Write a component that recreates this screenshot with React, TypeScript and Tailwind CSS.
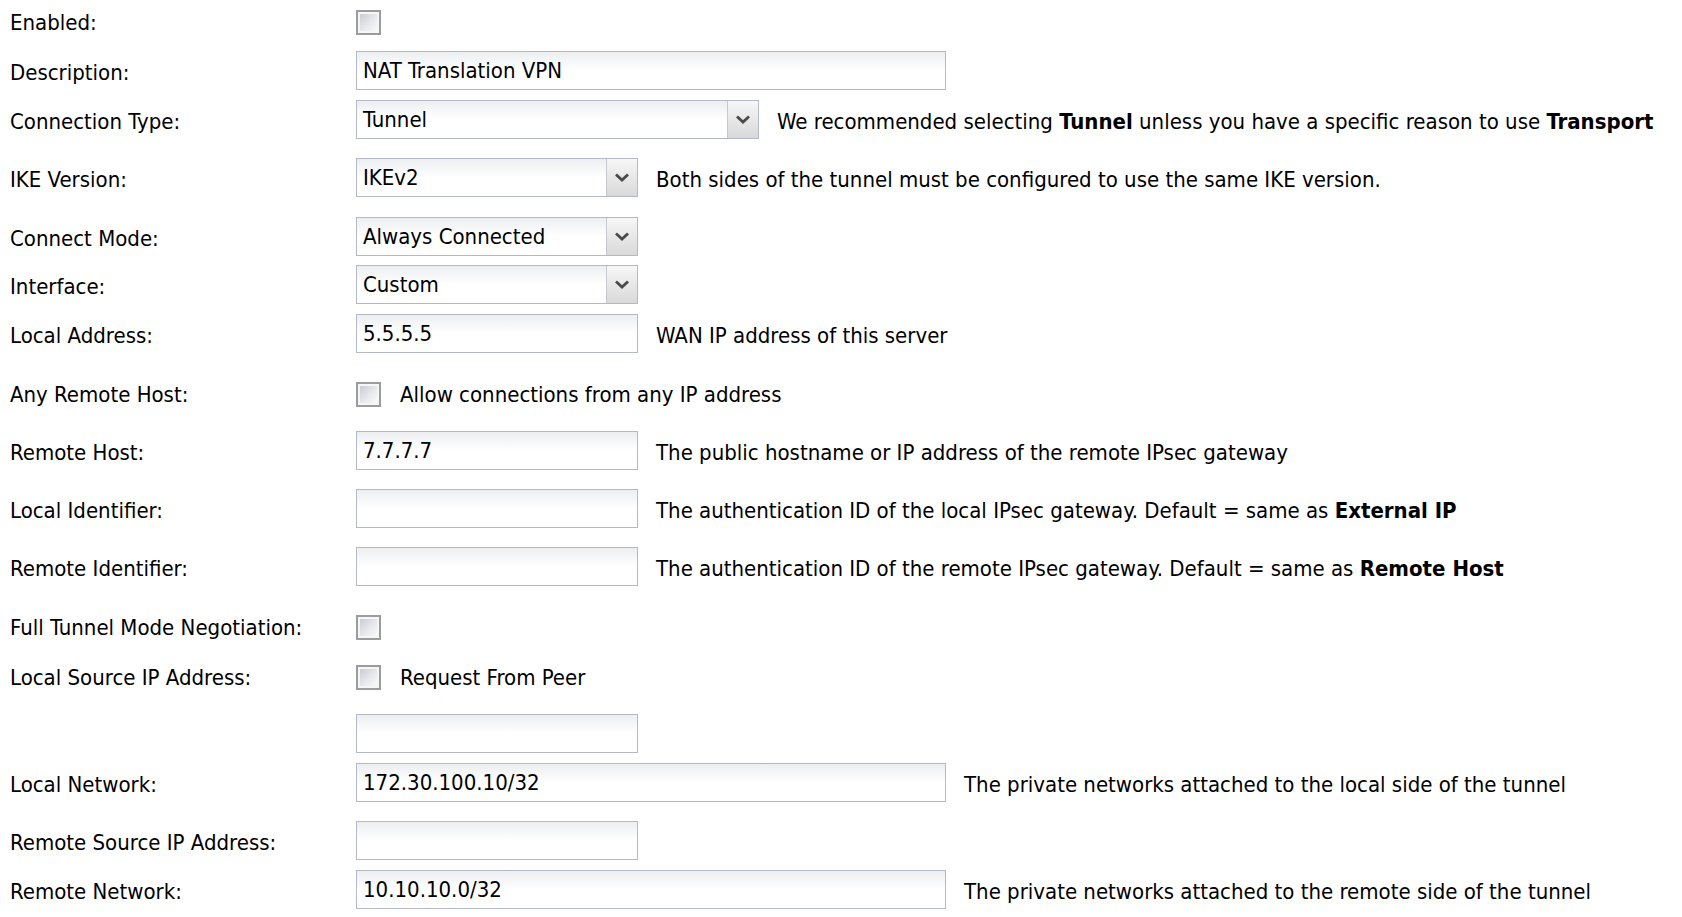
import React from 'react';

const font = { fontFamily: '"DejaVu Sans Condensed", "DejaVu Sans", sans-serif' };

function Checkbox() {
  return (
    <div className="w-[25px] h-[25px] shrink-0 border-2 border-[#9c9c9c] bg-[#f6f6f6] p-[2px]">
      <div className="w-full h-full bg-gradient-to-br from-[#c9ccd4] via-[#e4e6ea] to-[#fafafa]" />
    </div>
  );
}

function TextBox({ value = '', wide = false }: { value?: string; wide?: boolean }) {
  return (
    <div
      className={`${wide ? 'w-[590px]' : 'w-[282px]'} h-[39px] shrink-0 border border-[#b5b8c8] bg-gradient-to-b from-[#eceef0] via-white to-white flex items-center px-[6px] text-[22px] leading-[26px] text-black`}
    >
      {value}
    </div>
  );
}

function Select({ value, wide = false }: { value: string; wide?: boolean }) {
  return (
    <div
      className={`${wide ? 'w-[403px]' : 'w-[282px]'} h-[39px] shrink-0 border border-[#b5b8c8] flex`}
    >
      <div className="flex-1 flex items-center px-[6px] text-[22px] leading-[26px] text-black bg-gradient-to-b from-[#eceef0] via-white to-white">
        {value}
      </div>
      <div className="w-[31px] border-l border-[#c6c8cf] bg-gradient-to-b from-[#f7f7f7] to-[#d9d9d9] flex items-center justify-center">
        <svg width="14" height="9" viewBox="0 0 14 9">
          <path d="M1 1.5 L7 7 L13 1.5" fill="none" stroke="#4a4a4a" strokeWidth="2.8" />
        </svg>
      </div>
    </div>
  );
}

function Row({
  label,
  mt,
  box = false,
  children,
}: {
  label: string;
  mt: string;
  box?: boolean;
  children: React.ReactNode;
}) {
  return (
    <div className={`flex items-center ${box ? 'h-[25px]' : 'h-[39px]'} ${mt}`}>
      <div
        className={`w-[356px] shrink-0 pl-[10px] text-[22px] leading-[26px] text-black whitespace-nowrap ${box ? '' : 'pt-[5px]'}`}
      >
        {label}
      </div>
      <div className="flex items-center">{children}</div>
    </div>
  );
}

function Help({ children }: { children: React.ReactNode }) {
  return (
    <span className="ml-[18px] pt-[5px] text-[22px] leading-[26px] text-black whitespace-nowrap">{children}</span>
  );
}

export default function App() {
  return (
    <div className="min-h-screen bg-white w-[1682px] overflow-hidden" style={font}>
      <div className="flex flex-col pt-[10px]">
        <Row label="Enabled:" mt="mt-0" box>
          <Checkbox />
        </Row>
        <Row label="Description:" mt="mt-[16px]">
          <TextBox value="NAT Translation VPN" wide />
        </Row>
        <Row label="Connection Type:" mt="mt-[10px]">
          <Select value="Tunnel" wide />
          <Help>
            We recommended selecting <b>Tunnel</b> unless you have a specific reason to use <b>Transport</b>
          </Help>
        </Row>
        <Row label="IKE Version:" mt="mt-[19px]">
          <Select value="IKEv2" />
          <Help>Both sides of the tunnel must be configured to use the same IKE version.</Help>
        </Row>
        <Row label="Connect Mode:" mt="mt-[20px]">
          <Select value="Always Connected" />
        </Row>
        <Row label="Interface:" mt="mt-[9px]">
          <Select value="Custom" />
        </Row>
        <Row label="Local Address:" mt="mt-[10px]">
          <TextBox value="5.5.5.5" />
          <Help>WAN IP address of this server</Help>
        </Row>
        <Row label="Any Remote Host:" mt="mt-[29px]" box>
          <Checkbox />
          <span className="ml-[19px] text-[22px] leading-[26px] text-black">Allow connections from any IP address</span>
        </Row>
        <Row label="Remote Host:" mt="mt-[24px]">
          <TextBox value="7.7.7.7" />
          <Help>The public hostname or IP address of the remote IPsec gateway</Help>
        </Row>
        <Row label="Local Identifier:" mt="mt-[19px]">
          <TextBox />
          <Help>
            The authentication ID of the local IPsec gateway. Default = same as <b>External IP</b>
          </Help>
        </Row>
        <Row label="Remote Identifier:" mt="mt-[19px]">
          <TextBox />
          <Help>
            The authentication ID of the remote IPsec gateway. Default = same as <b>Remote Host</b>
          </Help>
        </Row>
        <Row label="Full Tunnel Mode Negotiation:" mt="mt-[29px]" box>
          <Checkbox />
        </Row>
        <Row label="Local Source IP Address:" mt="mt-[25px]" box>
          <Checkbox />
          <span className="ml-[19px] text-[22px] leading-[26px] text-black">Request From Peer</span>
        </Row>
        <Row label="" mt="mt-[24px]">
          <TextBox />
        </Row>
        <Row label="Local Network:" mt="mt-[10px]">
          <TextBox value="172.30.100.10/32" wide />
          <Help>The private networks attached to the local side of the tunnel</Help>
        </Row>
        <Row label="Remote Source IP Address:" mt="mt-[19px]">
          <TextBox />
        </Row>
        <Row label="Remote Network:" mt="mt-[10px]">
          <TextBox value="10.10.10.0/32" wide />
          <Help>The private networks attached to the remote side of the tunnel</Help>
        </Row>
      </div>
    </div>
  );
}
